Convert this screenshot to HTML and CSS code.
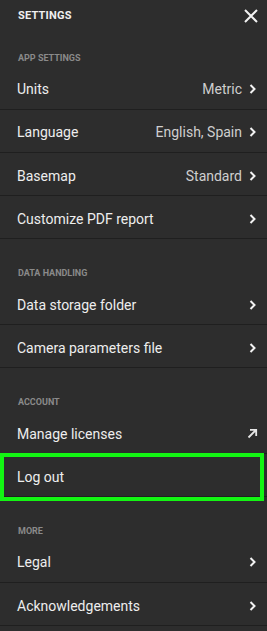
FILE: index.html
```html
<!DOCTYPE html>
<html lang="en">
<head>
  <meta charset="UTF-8">
  <meta name="viewport" content="width=device-width, initial-scale=1.0">
  <title>Settings</title>
  <link rel="stylesheet" href="styles.css">
</head>
<body>
  <div class="panel">
    <div class="header">
      <span class="title">SETTINGS</span>
      <svg class="close" width="14" height="14" viewBox="0 0 14 14">
        <path d="M1 1L13 13M13 1L1 13" stroke="#f2f2f2" stroke-width="2" fill="none"/>
      </svg>
    </div>

    <div class="label first">APP SETTINGS</div>
    <div class="row">
      <span class="name">Units</span>
      <span class="value">Metric</span>
      <svg class="chev" width="8" height="10" viewBox="0 0 8 10"><path d="M1.5 1L5.5 5L1.5 9" stroke="#f2f2f2" stroke-width="2" fill="none"/></svg>
    </div>
    <div class="row">
      <span class="name">Language</span>
      <span class="value">English, Spain</span>
      <svg class="chev" width="8" height="10" viewBox="0 0 8 10"><path d="M1.5 1L5.5 5L1.5 9" stroke="#f2f2f2" stroke-width="2" fill="none"/></svg>
    </div>
    <div class="row">
      <span class="name">Basemap</span>
      <span class="value">Standard</span>
      <svg class="chev" width="8" height="10" viewBox="0 0 8 10"><path d="M1.5 1L5.5 5L1.5 9" stroke="#f2f2f2" stroke-width="2" fill="none"/></svg>
    </div>
    <div class="row">
      <span class="name">Customize PDF report</span>
      <svg class="chev" width="8" height="10" viewBox="0 0 8 10"><path d="M1.5 1L5.5 5L1.5 9" stroke="#f2f2f2" stroke-width="2" fill="none"/></svg>
    </div>

    <div class="label">DATA HANDLING</div>
    <div class="row">
      <span class="name">Data storage folder</span>
      <svg class="chev" width="8" height="10" viewBox="0 0 8 10"><path d="M1.5 1L5.5 5L1.5 9" stroke="#f2f2f2" stroke-width="2" fill="none"/></svg>
    </div>
    <div class="row">
      <span class="name">Camera parameters file</span>
      <svg class="chev" width="8" height="10" viewBox="0 0 8 10"><path d="M1.5 1L5.5 5L1.5 9" stroke="#f2f2f2" stroke-width="2" fill="none"/></svg>
    </div>

    <div class="label">ACCOUNT</div>
    <div class="row">
      <span class="name">Manage licenses</span>
      <svg class="ext" width="11" height="11" viewBox="0 0 11 11"><path d="M1.5 9.5L9 2M3 1.8H9.2V8" stroke="#e6e6e6" stroke-width="1.8" fill="none"/></svg>
    </div>
    <div class="row marked">
      <span class="name">Log out</span>
      <div class="mark"></div>
    </div>

    <div class="label">MORE</div>
    <div class="row">
      <span class="name">Legal</span>
      <svg class="chev" width="8" height="10" viewBox="0 0 8 10"><path d="M1.5 1L5.5 5L1.5 9" stroke="#f2f2f2" stroke-width="2" fill="none"/></svg>
    </div>
    <div class="row">
      <span class="name">Acknowledgements</span>
      <svg class="chev" width="8" height="10" viewBox="0 0 8 10"><path d="M1.5 1L5.5 5L1.5 9" stroke="#f2f2f2" stroke-width="2" fill="none"/></svg>
    </div>
  </div>
</body>
</html>
```

FILE: styles.css
```css
body {
  margin: 0;
  background: #2d2d2d;
  font-family: Roboto, 'Liberation Sans', sans-serif;
  color: #ededed;
}
.panel {
  width: 267px;
  height: 631px;
  overflow: hidden;
  background: #2d2d2d;
}
.header {
  height: 30px;
  display: flex;
  align-items: center;
  justify-content: space-between;
  padding: 0 9px 0 18px;
}
.title {
  font-size: 11px;
  font-weight: bold;
  letter-spacing: 0.2px;
  color: #f0f0f0;
}
.close {
  margin-top: 2px;
}
.label {
  font-size: 9px;
  line-height: 12px;
  font-weight: bold;
  color: #8a8a8a;
  padding: 28px 18px 2.6px;
}
.label.first {
  padding-top: 22px;
}
.row {
  position: relative;
  height: 39.2px;
  display: flex;
  align-items: center;
  padding: 3px 10px 0 17px;
  border-bottom: 1px solid #1f1f1f;
  font-size: 14px;
}
.name {
  flex: 1;
  color: #eeeeee;
}
.value {
  color: #cfcfcf;
  margin-right: 7px;
}
.chev {
  flex: none;
}
.ext {
  flex: none;
  margin-right: -1px;
}
.mark {
  position: absolute;
  left: 0;
  right: 3px;
  top: -1px;
  bottom: -5px;
  border: 4px solid #13f513;
}
```
